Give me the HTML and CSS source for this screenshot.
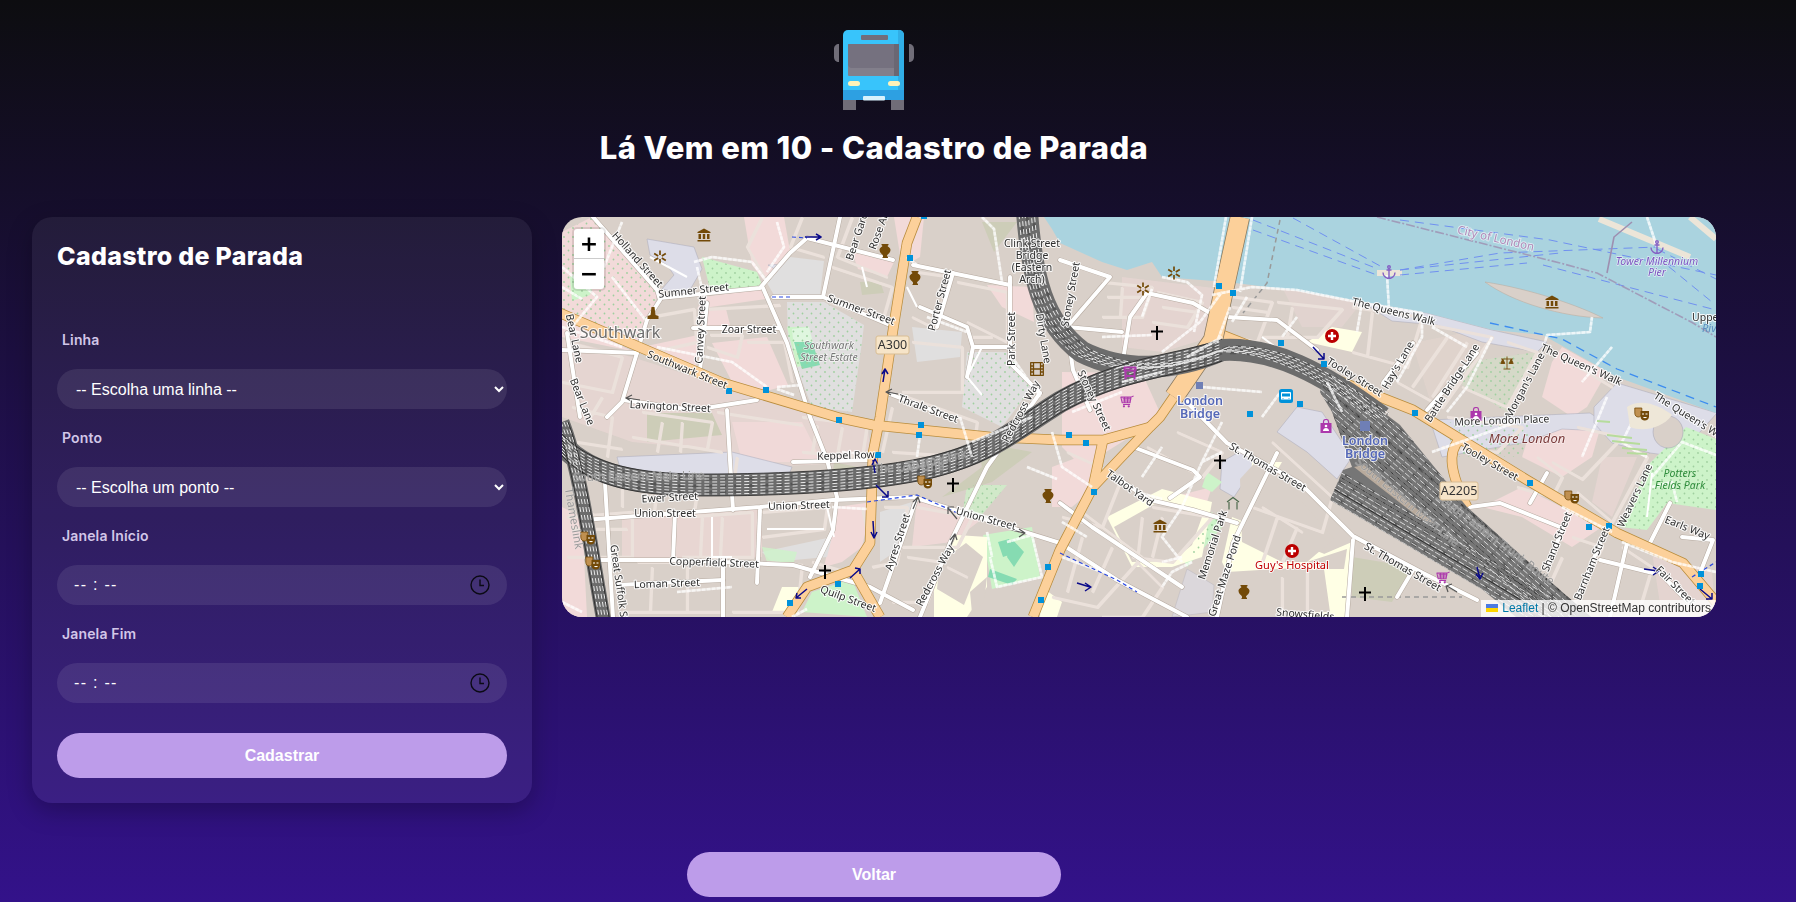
FILE: index.html
```html
<!DOCTYPE html>
<html lang="pt-BR">
<head>
<meta charset="utf-8">
<title>Lá Vem em 10 - Cadastro de Parada</title>
<link rel="stylesheet" href="styles.css">
</head>
<body>
<div class="page">
  <header class="header">
    <svg class="logo" viewBox="0 0 80 80" aria-hidden="true">
      <path class="bus-grey" d="M5 14c-3 0-5 2-5 5v8c0 3 2 5 5 5zM75 14c3 0 5 2 5 5v8c0 3-2 5-5 5z"/>
      <rect class="bus-grey" x="9" y="66" width="13" height="14"/>
      <rect class="bus-grey" x="57" y="66" width="13" height="14"/>
      <path class="bus-body" d="M9 5a5 5 0 0 1 5-5h51a5 5 0 0 1 5 5v65H9z"/>
      <path class="bus-shade" d="M64 0h1a5 5 0 0 1 5 5v65h-6z"/>
      <rect class="bus-bumper" x="9" y="60" width="61" height="10"/>
      <rect class="bus-sign" x="27" y="5" width="27" height="5" rx="1"/>
      <rect class="bus-win" x="14" y="14" width="51" height="32" rx="1"/>
      <path class="bus-win-top" d="M14 15a1 1 0 0 1 1-1h50v20a4 4 0 0 1-4 4H18a4 4 0 0 1-4-4z"/>
      <rect class="bus-win-side" x="60" y="14" width="5" height="32"/>
      <rect class="bus-light" x="14" y="51" width="12" height="5" rx="2.5"/>
      <rect class="bus-light" x="54" y="51" width="12" height="5" rx="2.5"/>
      <rect class="bus-plate" x="29" y="66" width="22" height="4.5" rx="1"/>
    </svg>
    <h1 class="title">Lá Vem em 10 - Cadastro de Parada</h1>
  </header>

  <main class="content">
    <section class="card">
      <h2 class="card-title">Cadastro de Parada</h2>
      <form class="form">
        <label class="label label-first" for="linha">Linha</label>
        <select class="field" id="linha"><option>-- Escolha uma linha --</option></select>
        <label class="label" for="ponto">Ponto</label>
        <select class="field" id="ponto"><option>-- Escolha um ponto --</option></select>
        <label class="label">Janela Início</label>
        <div class="field time"><span class="time-text">-- : --</span>
          <svg class="clock" viewBox="0 0 20 20"><circle cx="10" cy="10" r="9"/><path d="M10 4.5V10.5H14"/></svg></div>
        <label class="label">Janela Fim</label>
        <div class="field time"><span class="time-text">-- : --</span>
          <svg class="clock" viewBox="0 0 20 20"><circle cx="10" cy="10" r="9"/><path d="M10 4.5V10.5H14"/></svg></div>
        <button class="btn btn-submit" type="button">Cadastrar</button>
      </form>
    </section>

    <section class="map">
      <svg class="map-svg" viewBox="0 0 1154 400" aria-label="Mapa">
        <defs>
          <pattern id="dots" width="9" height="9" patternUnits="userSpaceOnUse"><circle class="dot" cx="2" cy="2" r=".9"/><circle class="dot" cx="6.5" cy="6.5" r=".9"/></pattern>
          <clipPath id="fan-clip"><path d="M765 152 838 208 905 290 998 373 1035 405H960L921 373 768 283 781 253 790 250 770 195 758 175z"/></clipPath>
          <path id="fl" d="M740 190 880 310 1000 415"/>
          <path id="fl2" d="M750 272 921 373 985 412"/>
          <path id="ra" d="M0 228C30 260 80 268 140 268 220 268 310 264 370 250 430 235 450 215 498 185 560 150 620 148 660 133"/>
          <path id="rb" d="M465 -5C470 60 480 105 520 135 560 155 610 155 660 133 710 130 760 155 820 200"/>
          <path id="rc" d="M0 205C18 250 30 340 42 405"/>
          <symbol id="i-museum" viewBox="0 0 14 14"><path class="ic-br" d="M.5 4 7 .5 13.500 4V5H.5zM1.500 6h2.500v5H1.500zM5.800 6h2.400v5H5.800zM10 6h2.500v5H10zM.5 12h13v1.500H.5z"/></symbol>
          <symbol id="i-vase" viewBox="0 0 14 14"><path class="ic-br" d="M3.500 0h7v1l-1 1c.5 1 3 1.500 3 4s-2.500 4-3.500 5.500v1h1V14H4v-.5h1v-2C4 10 1.500 8.500 1.500 6S4 3 4.500 2l-1-1z"/></symbol>
          <symbol id="i-star" viewBox="0 0 14 14"><path class="ic-star" d="M7 .5V5M7 9v4.500M1.200 3.500 5.200 6M8.800 8l4 2.500M1.200 10.500 5.200 8M8.800 6l4-2.500"/></symbol>
          <symbol id="i-cross" viewBox="0 0 14 14"><path class="ic-k" d="M6 0h2v4.500h5V6.500H8V14H6V6.500H1V4.500h5z"/></symbol>
          <symbol id="i-hosp" viewBox="0 0 14 14"><circle class="ic-red" cx="7" cy="7" r="7"/><path class="ic-w" d="M5.800 3h2.400v2.800H11v2.400H8.200V11H5.800V8.200H3V5.800h2.800z"/></symbol>
          <symbol id="i-mask" viewBox="0 0 16 14"><path class="ic-br2" d="M.8 1h7v5c0 2.500-1.500 4-3.500 4S.8 8.500.8 6z"/><path class="ic-br" d="M6.500 4h8.500v5.500c0 2.500-2 4-4.250 4S6.500 12 6.500 9.500z"/><path class="ic-w" d="M8 6.500h2v1H8zM11.500 6.500h2v1h-2zM9 10h4c-.5 1.500-3.500 1.500-4 0z"/></symbol>
          <symbol id="i-film" viewBox="0 0 14 14"><path class="ic-film" d="M.7.7h12.600v12.600H.7zM3.500.7v12.600M10.500.7v12.600M.7 4h2.800M.7 7h12.600M.7 10h2.800M10.500 4h2.800M10.500 10h2.800"/></symbol>
          <symbol id="i-anchor" viewBox="0 0 14 14"><path class="ic-anc" d="M7 3v10.500M4.500 5h5M1 7.500c0 3.500 3 6 6 6s6-2.500 6-6"/><circle class="ic-anc" cx="7" cy="2" r="1.300"/></symbol>
          <symbol id="i-scale" viewBox="0 0 14 14"><path class="ic-sc" d="M7 .5V13M3.500 13h7M1 3h12M2.800 3 .8 7.500h4zM11.200 3l-2 4.500h4z"/></symbol>
          <symbol id="i-bag" viewBox="0 0 12 14"><rect class="ic-pu" x=".5" y="4" width="11" height="10"/><path class="ic-pul" d="M3.500 5V2.500a2.500 2 0 0 1 5 0V5"/><circle class="ic-w" cx="6" cy="7" r="1.300"/><path class="ic-w" d="M3 12c0-4 6-4 6 0z"/></symbol>
          <symbol id="i-cart" viewBox="0 0 16 14"><path class="ic-pul" d="M15.500.8 12.500 2H1l1.500 6.500h9l1-6.500M3 4h10M3 6.500h9M5 2l.5 6.500M9 2l-.5 6.500M3.500 10.500h8"/><circle class="ic-pu" cx="4.500" cy="12.500" r="1.300"/><circle class="ic-pu" cx="10" cy="12.500" r="1.300"/></symbol>
          <symbol id="i-market" viewBox="0 0 14 14"><path class="ic-pum" d="M1.500 1.500h11v3h-11zM2.500 4.500v9M11.500 4.500v9M1.500 10h11"/></symbol>
          <symbol id="i-bus" viewBox="0 0 14 14"><rect class="ic-blue" width="14" height="14" rx="2.500"/><path class="ic-w" d="M3 3h8a1 1 0 0 1 1 1v6.500H2V4a1 1 0 0 1 1-1z"/><path class="ic-blue" d="M3 4.500h8v3H3zM3.500 9h1v.8h-1zM9.500 9h1v.8h-1z"/></symbol>
          <symbol id="i-shel" viewBox="0 0 14 14"><path class="ic-shel" d="M1 6 7 1.500 13 6M3 6v7.500M11 6v7.500"/></symbol>
        </defs>

        <rect class="m-build" width="1154" height="400"/>

        <g class="m-pink">
          <path d="M0 15 30 0 98 70 88 100 72 130 0 100z"/>
          <path d="M182 0H222L228 34 203 65 190 48z"/>
          <path d="M142 80 200 72 204 82 135 92z"/>
          <path d="M138 94 164 92 168 108 140 110z"/>
          <path d="M150 126 205 120 226 168 190 178 170 165z"/>
          <path d="M80 130 136 118 134 150 105 146z"/>
          <path d="M0 100 70 134 0 120z"/>
          <path d="M332 0H362L358 40 340 50z"/>
          <path d="M290 35 332 45 325 60 296 52z"/>
          <path d="M425 68 470 70 472 105 440 90z"/>
          <path d="M0 200 70 225 140 232 200 250 310 245 305 205 245 195 170 172 70 140 0 122z" opacity=".5"/>
          <path d="M170 205 240 205 260 245 180 245z" opacity=".8"/>
          <path d="M60 300 200 292 200 340 110 345 60 340z" opacity=".6"/>
          <path d="M275 290 310 285 300 330 280 345 262 350z"/>
          <path d="M0 290 20 300 25 400 0 400z"/>
          <path d="M355 282 420 302 390 325 350 330z" opacity=".8"/>
          <path d="M500 155 580 156 600 200 520 250 500 230z"/>
          <path d="M560 60 660 72 650 120 600 135 560 130z" opacity=".45"/>
          <path d="M850 126 920 112 940 112 870 190z" opacity=".25"/>
          <path d="M970 208 1040 205 1030 240 1000 260 960 240z"/>
          <path d="M1000 130 1045 155 1025 190 1010 200 980 180 990 145z"/>
          <path d="M960 270 1040 310 1010 330 960 300 920 290z"/>
          <path d="M1040 240 1075 240 1050 300 1030 285z" opacity=".5"/>
          <path d="M610 280 650 270 640 300 610 300z"/>
          <path d="M1090 335 1150 355 1154 400 1100 400z" opacity=".45"/>
          <path d="M720 70 800 85 780 110 740 110z" opacity=".35"/>
          <path d="M490 250 530 235 540 265 510 290 490 290z"/>
        </g>

        <g class="m-lilac">
          <path d="M85 22 132 30 140 52 125 78 100 72 112 58 105 48 88 38z"/>
          <path d="M206 48 260 45 256 55 222 58z"/>
          <path d="M868 203 1028 196 1088 236 1040 214 1000 212 965 225 880 240z"/>
          <path d="M1055 166 1155 196 1128 226 1118 240 1088 236 1050 226 1032 206 1032 190z"/>
          <path d="M800 85 865 96 930 113 985 125 975 135 920 125 875 108 830 104z"/>
          <path d="M660 245 682 232 696 244 672 280 658 272z"/>
          <path d="M735 190 760 195 790 240 775 262 745 235 715 215z"/>
          <path d="M55 240 170 235 230 250 225 262 60 258z"/>
          <path d="M610 400 650 395 652 368 625 352z" opacity=".6"/>
        </g>
        <g class="m-grey">
          <path d="M205 66 228 40 262 44 258 78 212 78z"/>
          <path d="M225 85 262 85 302 108 300 125 290 195 250 190 226 128z"/>
          <path d="M200 335 270 320 265 340 210 345z"/>
          <path d="M318 295 350 285 340 330 318 345z"/>
          <path d="M350 110 400 115 398 140 355 145z"/>
          <path d="M405 135 445 135 470 170 440 210 400 190z"/>
        </g>
        <g class="m-green">
          <path d="M140 40 195 55 200 68 170 74 148 72z"/>
          <path d="M8 60 40 40 28 78 10 84z"/>
          <path d="M225 110 245 110 255 145 235 150z"/>
          <path d="M1088 246 1124 210 1154 222V293L1105 286 1085 313 1058 310z"/>
          <path d="M240 395 250 375 290 362 305 400z"/>
          <path d="M421 318 470 310 478 360 430 372z"/>
          <path d="M405 268 445 268 418 300 400 300z" opacity=".7"/>
          <path d="M645 255 660 265 650 275 640 270z"/>
          <path d="M635 310 650 295 660 310 625 350 620 340z"/>
          <path d="M200 330 235 335 232 345 205 345z" opacity=".8"/>
          <path d="M905 145 975 135 945 195 900 168z" opacity=".25"/>
        </g>
        <path class="m-green2" d="M230 112 247 110 252 130 232 132z"/>
        <path class="m-leis" d="M232 125 250 125 258 148 240 152z"/>
        <path class="m-leis" d="M436 325 447 322 453 336 441 340zM450 322 462 335 452 350 445 340zM428 352 455 362 450 368 426 360z"/>
        <g class="m-yellow">
          <path d="M372 355 395 318 425 320 425 370 405 400 372 400z"/>
          <path d="M545 300 600 272 650 285 640 340 610 350 570 350z"/>
          <path d="M690 245 720 245 700 280 688 270z"/>
          <path d="M770 110 800 115 790 135 745 125z"/>
          <path d="M755 340 790 325 785 400 730 400 735 370z"/>
          <path d="M660 345 670 300 770 340 750 350 665 355z"/>
          <path d="M220 370 245 370 230 395 210 395z"/>
          <path d="M480 370 500 385 495 400 478 400z"/>
        </g>
        <g class="m-infill">
          <path d="M378 345 404 326 421 340 402 388 375 372z"/>
          <path d="M408 375 425 360 422 385 410 396z"/>
          <path d="M552 310 598 284 640 300 630 328 610 344 570 345z"/>
          <path d="M678 262 700 238 772 322 745 345 720 345 680 325z"/>
          <path d="M700 355 762 352 768 395 700 395z"/>
          <path d="M745 345 785 332 782 352 755 352z"/>
        </g>
        <path class="m-olive" d="M85 196 150 196 160 218 85 225zM298 65 318 64 322 76 300 78zM272 245 295 250 285 265 270 262zM790 340 850 350 830 385 790 380zM415 225 470 235 430 265 380 280 420 250zM455 5 432 35 420 5z"/>
        <path class="m-dots" d="M1088 246 1124 210 1154 222V293L1105 286 1085 313 1058 310zM225 85 262 85 302 108 300 125 290 195 250 190 226 128zM0 15 30 0 98 70 88 100 72 130 0 100zM140 40 195 55 200 68 170 74 148 72zM880 205 970 205 960 240 895 240zM405 135 445 135 470 170 440 210 400 190zM405 268 445 268 418 300 400 300zM905 145 975 135 945 195 900 168zM640 310 655 295 660 310 625 350z"/>

        <path class="m-water" d="M482 0H1154V196L1055 160 981 118 931 113 865 96 791 83 731 73 665 65 600 60 590 45 565 53 540 45 498 26 490 12z"/>
        <path class="m-isle" d="M923 65C970 72 1020 90 1041 101 1000 100 950 85 923 65z"/>
        <path class="m-pier" d="M1037 2 1128 40M815 56H840M1128 0 1154 22"/>
        <g class="m-ferry">
          <path d="M691 3 811 50M691 13 815 58M731 1 820 50M838 53 931 43 998 36M838 58 965 46"/>
          <path d="M838 53 938 36 1095 30M981 48 1154 93M838 3 988 23 1154 58M1095 32 1154 62M1095 40 1150 85"/>
          <path class="m-ferry2" d="M928 106 1000 122 1055 152 1154 190"/>
        </g>
        <path class="m-bound" d="M815 0 998 46 1035 56 1131 106 1154 120"/>
        <path class="m-bound2" d="M1045 56 1052 20 1070 5"/>
        <path class="m-tunnel" d="M718 3 705 66 681 96M780 380 900 380"/>

        <path id="edges" class="m-gap" d="M5 125 60 140 50 175 0 165M90 135 135 125M88 100 132 92 134 122M145 92 218 88M148 118 180 118 175 140 145 130M185 125 222 125 230 165M10 190 50 200 45 240M80 195 150 205 145 232M155 195 240 208M240 200 305 208 300 240 240 235M175 240 170 275M70 220 160 235M15 225 60 232M200 0 185 30 205 65M240 0 228 30 262 40M290 0 275 40 325 60M270 50 330 70 320 105 268 85M355 55 390 60 370 110 350 100M395 65 445 75 445 125 405 105M405 120 430 120M350 125 400 130 400 175 340 175M345 180 415 205 410 240 330 235M330 190 320 235M5 300 70 295 70 340 5 340M75 345 160 345 160 395 60 395M120 300 190 295 190 340 120 340M200 295 265 290 262 312 200 320M205 345 240 348 235 395 170 395M300 290 308 330 285 355 250 345M322 290 345 290 335 345 310 350M355 290 410 300 395 330 340 330M345 340 380 345 365 385 330 385M505 235 560 260 540 310 500 300M520 295 580 340 535 390 490 380M590 290 650 300 610 345 570 340M575 345 600 370 580 400 540 400M710 225 770 280 760 315 690 290M615 215 660 235 640 260 585 230M540 65 590 70 580 100 540 100M595 75 640 85 625 110 590 105M660 78 710 85 695 125 650 115M715 85 780 92 755 120 700 120M790 90 860 100 845 150 790 135M870 108 930 120 880 190 835 165M945 125 975 135 945 190 900 170M885 200 960 210 935 235 880 230M975 240 1000 260 990 280 955 270M1050 170 1000 140M1015 210 1060 220 1020 262 990 245M1060 225 1085 240 1050 305 1015 275M1010 320 1040 330 1005 400 975 395 1000 340M1060 330 1090 350 1075 400 1050 400M25 205 40 180M100 205 95 235M120 205 118 235M280 210 275 238M255 208 250 235M10 312H65M30 295V340M90 350 88 395M125 350 125 395M140 300 138 340M160 300 158 340M60 270 60 290M95 270 92 295M135 275 132 295M545 80H585M560 70 558 100M600 90 635 95M670 90 705 95M730 90 725 120M810 95 805 140M885 120 850 170M905 125 870 180M600 300 590 340M520 320 505 375M550 330 530 375M700 290 740 315M715 300 700 345M735 310 720 345M720 360V395M745 355V395M385 350 405 360M580 300 575 345"/>
        <use href="#edges" class="m-edge"/>

        <g id="streets">
          <path d="M31 0 95 73 98 83 85 103 78 126 60 185 45 200"/>
          <path d="M98 81 198 71 228 36 245 21 331 43"/>
          <path d="M278 0 261 80"/>
          <path d="M211 80H261L328 108"/>
          <path d="M201 71 225 126 248 200 265 243 275 280 271 313 248 360"/>
          <path d="M131 111H218"/>
          <path d="M145 86 138 153"/>
          <path d="M61 183 131 193 195 183"/>
          <path d="M-2 133 75 136"/>
          <path d="M5 116 18 200"/>
          <path d="M351 48 448 68"/>
          <path d="M391 56 375 110"/>
          <path d="M448 60V146L478 176"/>
          <path d="M411 130H445"/>
          <path d="M358 90 405 110 411 130 405 160"/>
          <path d="M325 176 391 201"/>
          <path d="M478 176 425 250 388 326 358 400"/>
          <path d="M355 280 318 386"/>
          <path d="M231 245 308 243"/>
          <path d="M21 303 198 290 271 283 351 280 498 326 555 363 625 400"/>
          <path d="M25 343 115 343 231 348 308 370 351 393"/>
          <path d="M55 368 161 363"/>
          <path d="M43 266 51 400"/>
          <path d="M198 293 195 366"/>
          <path d="M161 343V400"/>
          <path d="M165 193 171 293"/>
          <path d="M113 296 111 343"/>
          <path d="M585 76 631 86 655 100"/>
          <path d="M585 76 568 100 561 143"/>
          <path d="M498 43 548 60 505 110 511 153 528 193"/>
          <path d="M505 110 560 115"/>
          <path d="M665 100 715 103 755 133"/>
          <path d="M851 126 821 166"/>
          <path d="M915 136 865 193"/>
          <path d="M620 180 665 226 738 266 791 319 861 356 915 383"/>
          <path d="M548 256 588 283 631 293 675 306"/>
          <path d="M571 230 631 253 638 260 608 281"/>
          <path d="M715 236 671 326 655 400"/>
          <path d="M498 286 530 310 620 370"/>
          <path d="M791 323 785 400"/>
          <path d="M851 353 835 380"/>
          <path d="M908 290 938 286 998 310"/>
          <path d="M985 256 968 286"/>
          <path d="M1005 301 985 350"/>
          <path d="M1041 320 1015 380"/>
          <path d="M1065 326 1048 400"/>
          <path d="M1038 343 1091 356"/>
          <path d="M1108 286 1088 326"/>
          <path d="M1098 356 1124 383"/>
          <path d="M1120 320 1151 323 1138 356"/>
        </g>
        <use href="#streets" class="st-case"/>
        <use href="#streets" class="st-fill"/>
        <path class="st-thin" d="M88 40 125 60M700 120 720 135M265 290 272 320M205 312 262 312M150 300 150 340 170 340M300 50 305 70M345 70 355 90M420 130 405 160 420 178M1090 256 1085 300M815 215 830 240"/>

        <g id="trunk">
          <path d="M651 123 598 200 588 210 531 270 498 333 471 400"/>
          <path d="M655 116 851 193 965 263 1055 316 1121 346 1154 385"/>
          <path d="M-2 96 161 166 278 201 311 208 428 220 498 223 541 223 588 210"/>
          <path d="M355 0 345 26 331 113 318 200 311 236 308 326 291 353 245 370 225 400"/>
          <path d="M291 353 318 400"/>
          <path d="M541 223 531 270"/>
          <path d="M898 222C885 235 888 255 905 290"/>
        </g>
        <use href="#trunk" class="tr-case"/>
        <use href="#trunk" class="tr-fill"/>
        <path class="tr-wide-case" d="M678 0 651 123 612 180"/>
        <path class="tr-wide" d="M678 0 651 123 612 180"/>

        <use href="#rc" class="rail-bed rail-bed-n"/>
        <use href="#ra" class="rail-bed"/>
        <use href="#rb" class="rail-bed"/>
        <path class="rail-fan" d="M765 152 838 208 905 290 998 373 1035 405H960L921 373 768 283 781 253 790 250 770 195 758 175z"/>
        <path class="rail-gap" d="M792 250 802 248 872 306 860 303z"/>

        <g class="rail-blk">
          <use href="#ra" y="-6"/><use href="#ra" y="1"/><use href="#ra" y="7"/>
          <use href="#rb" x="-6"/><use href="#rb" y="3"/><use href="#rb" x="6" y="-3"/>
        </g>
        <g class="rail-wh">
          <use href="#ra" y="-9"/><use href="#ra" y="-6"/><use href="#ra" y="-3"/><use href="#ra"/><use href="#ra" y="3"/><use href="#ra" y="6"/><use href="#ra" y="9"/>
          <use href="#rb" x="-8" y="2"/><use href="#rb" x="-5" y="1"/><use href="#rb" x="-2" y="1"/><use href="#rb" x="1"/><use href="#rb" x="4" y="-2"/><use href="#rb" x="7" y="-3"/>
          <use href="#rc" x="-4"/><use href="#rc" x="-1"/><use href="#rc" x="2"/><use href="#rc" x="5"/>
        </g>
        <g clip-path="url(#fan-clip)">
          <g class="rail-blk">
            <use href="#fl" x="3" y="-3"/><use href="#fl" x="9" y="-9"/><use href="#fl" x="15" y="-15"/><use href="#fl" x="21" y="-21"/><use href="#fl" x="27" y="-27"/><use href="#fl" x="33" y="-33"/><use href="#fl" x="39" y="-39"/><use href="#fl" x="45" y="-45"/><use href="#fl" x="51" y="-51"/><use href="#fl" x="57" y="-57"/>
            <use href="#fl2" x="3" y="-3"/><use href="#fl2" x="9" y="-9"/><use href="#fl2" x="15" y="-15"/><use href="#fl2" x="21" y="-21"/>
          </g>
          <g class="rail-wh rail-wh-f">
            <use href="#fl"/><use href="#fl" x="3" y="-3"/><use href="#fl" x="6" y="-6"/><use href="#fl" x="9" y="-9"/><use href="#fl" x="12" y="-12"/><use href="#fl" x="15" y="-15"/><use href="#fl" x="18" y="-18"/><use href="#fl" x="21" y="-21"/><use href="#fl" x="24" y="-24"/><use href="#fl" x="27" y="-27"/><use href="#fl" x="30" y="-30"/><use href="#fl" x="33" y="-33"/><use href="#fl" x="36" y="-36"/><use href="#fl" x="39" y="-39"/><use href="#fl" x="42" y="-42"/><use href="#fl" x="45" y="-45"/><use href="#fl" x="48" y="-48"/><use href="#fl" x="51" y="-51"/><use href="#fl" x="54" y="-54"/><use href="#fl" x="57" y="-57"/><use href="#fl" x="60" y="-60"/>
            <use href="#fl2"/><use href="#fl2" x="3" y="-3"/><use href="#fl2" x="6" y="-6"/><use href="#fl2" x="9" y="-9"/><use href="#fl2" x="12" y="-12"/><use href="#fl2" x="15" y="-15"/><use href="#fl2" x="18" y="-18"/><use href="#fl2" x="21" y="-21"/>
          </g>
          <g class="rail-k">
            <use href="#fl" x="6" y="-6"/><use href="#fl" x="21" y="-21"/><use href="#fl" x="36" y="-36"/><use href="#fl" x="51" y="-51"/><use href="#fl2" x="8" y="-8"/><use href="#fl2" x="18" y="-18"/>
          </g>
        </g>
        <g class="rail-k"><use href="#rc" x="-6"/><use href="#rc" x="6"/><use href="#ra" y="-11"/><use href="#ra" y="11"/></g>

        <path id="foots" class="foot-under" d="M60 5 38 60M0 50 35 80 10 110M50 60 85 105M132 45 150 40 190 45 205 65M215 5 222 30 205 55M135 50 142 80M95 130 170 145 205 170M215 170 240 168M232 178 215 172M0 110 60 130M20 82 0 70M345 40 355 48M420 0 432 12 440 65M365 100 405 115M398 200 410 240M450 140 478 180M280 235 312 238M358 218 355 240M410 225 470 200M270 290 305 292M395 290 440 305M425 315 430 340M600 135 638 105 660 75M600 60 625 65 640 78 632 115M590 72 580 100M650 78 690 70 735 73 790 84 860 96 860 120 835 165M735 100 720 120M800 85 795 115M930 120 905 170 885 195M870 110 905 130M1050 130 1020 165M560 175 510 195M490 215 500 250 530 270M600 155 560 165M640 170 700 175M720 173 700 200M660 205 640 245 620 290 600 320 620 345M640 245 660 235M580 260 600 230M500 305 525 320M620 340 600 345M630 345 610 355 600 370M765 165 780 195M1045 180 1020 240M1070 205 1060 225 1075 235 1085 240M1090 260 1120 225 1154 238M1090 270 1110 265 1115 285M1060 325 1110 345 1154 355M1000 290 1050 315M870 235 955 205M465 250 495 262M500 340 540 355M575 275 600 282M0 385 20 395M115 375 170 370M230 400 245 392M1030 100 1028 115 985 118 983 125M825 58 827 92M1085 0 1095 30M664 0 652 70M690 0 678 75M668 90 655 125M685 80 670 105M540 120 590 118M445 325 470 318 480 360 435 370 428 340M625 140 660 120"/>
        <use href="#foots" class="m-foot"/>
        <path class="m-dash-blue" d="M210 80H228M305 285 355 278 400 298M498 336 555 363 575 375M0 395 10 400M230 20 245 21M1130 360 1154 345"/>
        <path class="m-round" d="M1106 199a15 16 0 1 0 .1 0z"/>
        <path class="m-island" d="M1065 190C1080 180 1100 190 1110 198 1100 212 1080 215 1068 210z"/>
        <path class="m-strip" d="M1035 204 1048 205M1045 218 1070 221M1050 224 1078 227M1060 231 1085 233M1065 236 1085 237"/>

        <g class="m-arrow">
          <path d="M243 20H258M254 17 259 20 254 23"/>
          <path d="M321 165 323 152M320 157 323 152 326 157"/>
          <path d="M313 256 311 243M310 248 313 242 316 248"/>
          <path d="M314 268 326 280M320 280 326 280 326 274"/>
          <path d="M311 304 312 320M309 315 312 321 315 315"/>
          <path d="M288 361 298 352M293 351 298 352 298 357"/>
          <path d="M245 372 234 381M239 381 234 381 235 376"/>
          <path d="M751 130 762 142M756 142 762 142 762 136"/>
          <path d="M1082 352 1096 354M1091 350 1097 354 1091 358"/>
          <path d="M1138 372 1150 382M1144 382 1150 382 1150 376"/>
          <path d="M915 350 918 362M914 357 918 362 921 356"/>
          <path d="M515 366 528 370M523 366 529 370 523 374"/>
        </g>
        <path class="m-arrow-g" d="M78 183 65 181M70 178 64 181 69 184M336 177 325 175M330 172 324 175 329 178M351 292 356 280M351 285 356 280 358 286M388 330 393 318M388 323 393 317 395 323M395 302 386 291M392 290 386 290 386 297M450 313 462 316M457 312 463 316 457 320M895 375 885 369M890 367 884 369 886 375"/>

        <g class="m-stop">
          <rect x="164" y="171" width="6" height="6"/><rect x="201" y="170" width="6" height="6"/><rect x="274" y="200" width="6" height="6"/>
          <rect x="345" y="38" width="6" height="6"/><rect x="359" y="-4" width="6" height="6"/><rect x="356" y="205" width="6" height="6"/>
          <rect x="354" y="215" width="6" height="6"/><rect x="313" y="235" width="6" height="6"/><rect x="273" y="364" width="6" height="6"/>
          <rect x="225" y="383" width="6" height="6"/><rect x="483" y="347" width="6" height="6"/><rect x="476" y="380" width="6" height="6"/>
          <rect x="654" y="66" width="6" height="6"/><rect x="668" y="73" width="6" height="6"/><rect x="716" y="123" width="6" height="6"/>
          <rect x="759" y="144" width="6" height="6"/><rect x="735" y="184" width="6" height="6"/><rect x="685" y="194" width="6" height="6"/>
          <rect x="850" y="193" width="6" height="6"/><rect x="504" y="215" width="6" height="6"/><rect x="521" y="223" width="6" height="6"/>
          <rect x="529" y="272" width="6" height="6"/><rect x="965" y="263" width="6" height="6"/><rect x="1024" y="307" width="6" height="6"/>
          <rect x="1044" y="306" width="6" height="6"/><rect x="1136" y="354" width="6" height="6"/><rect x="1135" y="366" width="6" height="6"/>
        </g>
        <path class="m-station" d="M634 165h7v7h-7zM798 204h10v10h-10z"/>

        <use href="#i-museum" x="135" y="11" width="14" height="14"/>
        <use href="#i-museum" x="983" y="78" width="14" height="14"/>
        <use href="#i-museum" x="591" y="302" width="14" height="14"/>
        <use href="#i-star" x="91" y="33" width="14" height="14"/>
        <use href="#i-star" x="605" y="49" width="14" height="14"/>
        <use href="#i-star" x="574" y="65" width="14" height="14"/>
        <use href="#i-vase" x="316" y="27" width="14" height="14"/>
        <use href="#i-vase" x="346" y="54" width="14" height="14"/>
        <use href="#i-vase" x="479" y="272" width="14" height="14"/>
        <use href="#i-vase" x="675" y="368" width="14" height="14"/>
        <use href="#i-film" x="468" y="145" width="14" height="14"/>
        <use href="#i-mask" x="18" y="314" width="16" height="14"/>
        <use href="#i-mask" x="23" y="339" width="16" height="14"/>
        <use href="#i-mask" x="355" y="258" width="16" height="14"/>
        <use href="#i-mask" x="1072" y="190" width="16" height="14"/>
        <use href="#i-mask" x="1002" y="273" width="16" height="14"/>
        <use href="#i-cross" x="384" y="261" width="14" height="14"/>
        <use href="#i-cross" x="256" y="348" width="14" height="14"/>
        <use href="#i-cross" x="588" y="109" width="14" height="14"/>
        <use href="#i-cross" x="651" y="238" width="14" height="14"/>
        <use href="#i-cross" x="796" y="370" width="14" height="14"/>
        <use href="#i-hosp" x="763" y="112" width="14" height="14"/>
        <use href="#i-hosp" x="723" y="327" width="14" height="14"/>
        <use href="#i-bus" x="717" y="172" width="14" height="14"/>
        <use href="#i-anchor" x="820" y="48" width="14" height="14"/>
        <use href="#i-anchor" x="1088" y="23" width="14" height="14"/>
        <use href="#i-scale" x="938" y="139" width="14" height="14"/>
        <use href="#i-bag" x="908" y="190" width="12" height="14"/>
        <use href="#i-bag" x="758" y="202" width="12" height="14"/>
        <use href="#i-cart" x="558" y="178" width="14" height="13"/>
        <use href="#i-cart" x="874" y="354" width="14" height="13"/>
        <use href="#i-market" x="561" y="149" width="14" height="14"/>
        <use href="#i-shel" x="664" y="279" width="14" height="14"/>
        <path class="ic-monu" d="M89.500 90h3l1 8 3 1v3h-11v-3l3-1z"/>

        <g class="lb">
          <text transform="translate(73 45) rotate(48)">Holland Street</text>
          <text transform="translate(132 77) rotate(-6)">Sumner Street</text>
          <text transform="translate(298 96) rotate(20)">Sumner Street</text>
          <text transform="translate(142 113) rotate(-87)">Canvey Street</text>
          <text transform="translate(187 116)">Zoar Street</text>
          <text transform="translate(124 156) rotate(22)">Southwark Street</text>
          <text transform="translate(9 122) rotate(78)">Bear Lane</text>
          <text transform="translate(17 186) rotate(68)">Bear Lane</text>
          <text transform="translate(301 12) rotate(-72)">Bear Gardens</text>
          <text transform="translate(322 10) rotate(-70)">Rose Alley</text>
          <text transform="translate(381 84) rotate(-75)">Porter Street</text>
          <text transform="translate(453 122) rotate(-90)">Park Street</text>
          <text transform="translate(478 122) rotate(80)">Dirty Lane</text>
          <text transform="translate(462 196) rotate(-62)">Redcross Way</text>
          <text transform="translate(108 193) rotate(3)">Lavington Street</text>
          <text transform="translate(365 195) rotate(20)">Thrale Street</text>
          <text transform="translate(284 242) rotate(-2)">Keppel Row</text>
          <text transform="translate(108 284) rotate(-3)">Ewer Street</text>
          <text transform="translate(237 292) rotate(-2)">Union Street</text>
          <text transform="translate(103 300)">Union Street</text>
          <text transform="translate(423 305) rotate(15)">Union Street</text>
          <text transform="translate(339 326) rotate(-72)">Ayres Street</text>
          <text transform="translate(376 360) rotate(-62)">Redcross Way</text>
          <text transform="translate(55 376) rotate(82)">Great Suffolk Street</text>
          <text transform="translate(152 349) rotate(2)">Copperfield Street</text>
          <text transform="translate(105 370) rotate(-2)">Loman Street</text>
          <text transform="translate(285 385) rotate(20)">Quilp Street</text>
          <text transform="translate(512 78) rotate(-80)">Stoney Street</text>
          <text transform="translate(529 185) rotate(65)">Stoney Street</text>
          <text transform="translate(831 98) rotate(14)">The Queens Walk</text>
          <text transform="translate(791 163) rotate(32)">Tooley Street</text>
          <text transform="translate(926 248) rotate(30)">Tooley Street</text>
          <text transform="translate(839 150) rotate(-60)">Hay's Lane</text>
          <text transform="translate(893 168) rotate(-57)">Battle Bridge Lane</text>
          <text transform="translate(966 170) rotate(-62)">Morgan's Lane</text>
          <text transform="translate(940 207) rotate(-2)">More London Place</text>
          <text transform="translate(704 253) rotate(30)">St. Thomas Street</text>
          <text transform="translate(839 353) rotate(30)">St. Thomas Street</text>
          <text transform="translate(566 274) rotate(35)">Talbot Yard</text>
          <text transform="translate(654 329) rotate(-72)">Memorial Park</text>
          <text transform="translate(666 360) rotate(-72)">Great Maze Pond</text>
          <text transform="translate(743 401) rotate(5)">Snowsfields</text>
          <text transform="translate(1018 151) rotate(24)">The Queen's Walk</text>
          <text transform="translate(1128 204) rotate(32)">The Queen's Walk</text>
          <text transform="translate(1076 280) rotate(-65)">Weavers Lane</text>
          <text transform="translate(1124 314) rotate(22)">Earls Way</text>
          <text transform="translate(998 326) rotate(-68)">Shand Street</text>
          <text transform="translate(1033 348) rotate(-68)">Barnham Street</text>
          <text transform="translate(1111 371) rotate(45)">Fair Street</text>
          <text x="470" y="30">Clink Street</text>
          <text x="470" y="42">Bridge</text>
          <text x="470" y="54">(Eastern</text>
          <text x="470" y="66">Arch)</text>
          <text class="lb-start" x="1130" y="104">Upper Thames</text>
        </g>
        <g class="lb lb-grey">
          <text transform="translate(375 247) rotate(-12)">Thameslink</text>
          <text transform="translate(347 254) rotate(-2)">The Low Line</text>
          <text transform="translate(77 263) rotate(-1)">South Eastern Main Line</text>
          <text transform="translate(8 302) rotate(80)">Thameslink</text>
          <text transform="translate(843 288) rotate(40)">South Eastern Main Line</text>
          <text transform="translate(931 325) rotate(37)">South Eastern Trunk Route</text>
        </g>
        <text class="lb-area" x="58" y="121">Southwark</text>
        <g class="lb-it"><text x="267" y="132">Southwark</text><text x="267" y="144">Street Estate</text></g>
        <g class="lb-st"><text x="638" y="188">London</text><text x="638" y="201">Bridge</text><text x="803" y="228">London</text><text x="803" y="241">Bridge</text></g>
        <text class="lb-bound" transform="translate(933 25) rotate(13)">City of London</text>
        <text class="lb-dist" x="965" y="226">More London</text>
        <text class="lb-hosp" x="730" y="352">Guy's Hospital</text>
        <g class="lb-pier"><text x="1095" y="48">Tower Millennium</text><text x="1095" y="59">Pier</text></g>
        <text class="lb-riv" x="1140" y="115">River Thames</text>
        <g class="lb-park"><text x="1118" y="260">Potters</text><text x="1118" y="272">Fields Park</text></g>

        <g class="shield">
          <rect x="314" y="119" width="33" height="18" rx="2"/><text x="330.500" y="132">A300</text>
          <rect x="878" y="265" width="38" height="18" rx="2"/><text x="897" y="278">A2205</text>
        </g>
      </svg>

      <div class="zoom">
        <a class="zoom-btn zoom-in">+</a>
        <a class="zoom-btn">−</a>
      </div>
      <div class="attrib"><svg class="flag" viewBox="0 0 12 8"><rect width="12" height="4" class="flag-b"/><rect y="4" width="12" height="4" class="flag-y"/></svg><a class="attrib-link">Leaflet</a> | © OpenStreetMap contributors</div>
    </section>
  </main>

  <footer class="footer">
    <button class="btn btn-back" type="button">Voltar</button>
  </footer>
</div>
</body>
</html>
```
FILE: styles.css
```css
* { box-sizing: border-box; }
html, body { margin: 0; height: 902px; overflow: hidden; }
body { background: linear-gradient(180deg, #0d0d10 0%, #33128a 100%); color: #fff; }
.page { width: 1748px; height: 902px; padding: 30px 32px 5px; display: flex; flex-direction: column; }
.header { display: flex; flex-direction: column; align-items: center; }
.logo { width: 80px; height: 80px; display: block; }
.bus-grey { fill: #706d78; }
.bus-body { fill: #38c4fb; }
.bus-shade { fill: #31aee6; }
.bus-bumper { fill: #2da0e2; }
.bus-sign { fill: #716e7c; }
.bus-win { fill: #827f8b; }
.bus-win-top { fill: #75717f; }
.bus-win-side { fill: #6a6773; }
.bus-light { fill: #fff3b8; }
.bus-plate { fill: #d8f2fd; }
.title { margin: 19px 0 0; font: 800 31px/38px Inter, sans-serif; color: #fff; letter-spacing: .42px; white-space: nowrap; }
.content { display: flex; gap: 30px; align-items: flex-start; margin-top: 50px; }
.card { width: 500px; flex: none; height: 586px; padding: 24px 25px 25px; border-radius: 20px; background: rgba(255, 255, 255, .06); box-shadow: 0 8px 24px rgba(0, 0, 0, .25); }
.card-title { margin: 0; font: 800 25px/30px Inter, sans-serif; color: #fff; letter-spacing: .3px; }
.form { display: flex; flex-direction: column; }
.label { display: block; height: 18px; margin: 0 0 20px 5px; font: 600 14px/18px Inter, sans-serif; letter-spacing: .15px; color: #d2c6e8; }
.label-first { margin-top: 60px; }
.field { display: block; width: 450px; height: 40px; flex: none; border: 0; border-radius: 20px; background-color: rgba(255, 255, 255, .085); color: #fff; font: 16px "Liberation Sans", sans-serif; padding: 0 5px 0 15px; margin-bottom: 20px; outline: 0; }
.field option { color: #000; }
.time { display: flex; align-items: center; justify-content: space-between; padding: 0 17px; }
.time-text { font: 16px "Liberation Sans", sans-serif; letter-spacing: 1.3px; }
.clock { width: 20px; height: 20px; fill: none; stroke: #0b0a14; stroke-width: 1.4; }
.btn { display: block; border: 0; height: 45px; border-radius: 25px; background: #bd9cea; color: #fff; font: 700 16px "Liberation Sans", sans-serif; }
.btn-submit { width: 450px; margin-top: 10px; }
.footer { display: flex; justify-content: center; margin-top: 49px; }
.btn-back { width: 374px; }

.map { position: relative; width: 1154px; height: 400px; flex: none; border-radius: 20px; overflow: hidden; }
.map-svg { display: block; width: 1154px; height: 400px; }
.map-svg text { font-family: "Noto Sans", sans-serif; }
.map-svg path, .map-svg g { stroke-linejoin: round; }
.m-build { fill: #d9d0c9; }
.m-infill { fill: #d9d0c9; }
.m-pink path { fill: #f2dad9; }
.m-lilac path { fill: #dddde8; stroke: #a9a9b8; stroke-width: .5; }
.m-grey path { fill: #e0dfdf; }
.m-green path { fill: #cdf3c9; }
.m-green2 { fill: #dff6df; }
.m-leis { fill: #86dbb2; }
.m-yellow path { fill: #ffffe5; }
.m-olive { fill: #cdcdb8; }
.m-dots { fill: url(#dots); }
.dot { fill: #9fcf9f; }
.m-water { fill: #aad3df; }
.m-isle { fill: #d9d0c9; stroke: #b8a99b; stroke-width: .5; }
.m-pier { fill: none; stroke: #ece5d8; stroke-width: 6; }
.foot-under { fill: none; stroke: #fff; stroke-opacity: .55; stroke-width: 2.6; }
.m-foot { fill: none; stroke: #fa8072; stroke-width: 1.5; stroke-dasharray: 3.5 1.5; stroke-opacity: 1; }
.m-ferry { fill: none; stroke: #7090f0; stroke-width: 1; stroke-dasharray: 9 6; }
.m-ferry2 { stroke: #3c8cf0; stroke-width: 1.3; }
.m-bound { fill: none; stroke: #9e8fb0; stroke-width: 1.6; stroke-dasharray: 9 2 2 2; opacity: .8; }
.m-bound2 { fill: none; stroke: #9e8fb0; stroke-width: 1.6; }
.m-tunnel { fill: none; stroke: #999; stroke-width: 1.5; stroke-dasharray: 5 4; }
.m-gap { fill: none; stroke: #ebe1db; stroke-width: 2.4; }
.m-edge { stroke: #b9ab9f; stroke-width: .7; transform: translate(.9px, .9px); }
#streets path { fill: none; }
.st-case { stroke: #b5a99f; stroke-width: 5; stroke-linecap: round; }
.st-fill { stroke: #fff; stroke-width: 4; stroke-linecap: round; }
.st-thin { fill: none; stroke: #fff; stroke-width: 2; }
#trunk path { fill: none; }
.tr-case { stroke: #b98c3c; stroke-width: 10.5; }
.tr-fill { stroke: #fcd09a; stroke-width: 9; }
.tr-wide-case { fill: none; stroke: #8a7a60; stroke-width: 20; }
.tr-wide { fill: none; stroke: #fcd09a; stroke-width: 18.5; }
.rail-bed { fill: none; stroke: #6c6c6c; stroke-width: 22; }
.rail-bed-n { stroke-width: 15; }
.rail-fan { fill: #767676; }
.rail-gap { fill: #b8aa9c; }
.rail-blk { fill: none; stroke: #4e4e4e; stroke-width: 2.8; stroke-dasharray: 6 8; opacity: .75; }
.rail-wh { fill: none; stroke: #fff; stroke-width: 1; stroke-dasharray: 5 3; opacity: .85; }
.rail-wh-f { stroke-width: .9; stroke-dasharray: 6 2; opacity: .8; }
.rail-k { fill: none; stroke: #161616; stroke-width: .7; }
.m-dash-blue { fill: none; stroke: #2a48e0; stroke-width: 1.2; stroke-dasharray: 4 3; }
.m-round { fill: #d9d0c9; stroke: #a9a9b8; stroke-width: .6; }
.m-island { fill: #eee7d8; }
.m-strip { fill: none; stroke: #b6dc9c; stroke-width: 2; }
.m-arrow { fill: none; stroke: #0a0a8a; stroke-width: 1.5; }
.m-arrow-g { fill: none; stroke: #555; stroke-width: 1.2; }
.m-stop rect { fill: #0092da; }
.m-station { fill: #6f7fb5; }
.ic-br { fill: #734a08; }
.ic-br2 { fill: #c09050; stroke: #734a08; stroke-width: .8; }
.ic-star { fill: none; stroke: #734a08; stroke-width: 1.7; }
.ic-k { fill: #000; }
.ic-red { fill: #bb0000; }
.ic-w { fill: #fff; }
.ic-film { fill: none; stroke: #734a08; stroke-width: 1.3; }
.ic-anc { fill: none; stroke: #8461c4; stroke-width: 1.4; }
.ic-sc { fill: #734a08; stroke: #734a08; stroke-width: .9; }
.ic-pu { fill: #ac39ac; }
.ic-pul { fill: none; stroke: #ac39ac; stroke-width: 1.2; }
.ic-pum { fill: none; stroke: #ac39ac; stroke-width: 2; }
.ic-blue { fill: #0092da; }
.ic-shel { fill: none; stroke: #4c6a4c; stroke-width: 1.2; }
.ic-monu { fill: #734a08; }

.lb text { font-size: 10.5px; fill: #2e2e2e; text-anchor: middle; paint-order: stroke; stroke: #fff; stroke-opacity: .85; stroke-width: 2.2px; }
.lb .lb-start { text-anchor: start; }
.lb-grey text { fill: #9a9a9a; font-size: 11.5px; stroke: #eee; stroke-opacity: .3; stroke-width: 1.2px; }
.lb-area { font-size: 16px; fill: #6c6c6c; text-anchor: middle; paint-order: stroke; stroke: #fff; stroke-width: 2px; stroke-opacity: .8; }
.lb-it text { font-size: 10.5px; font-style: italic; fill: #777; text-anchor: middle; paint-order: stroke; stroke: #fff; stroke-width: 1.5px; stroke-opacity: .7; }
.lb-st text { font-size: 12.5px; font-weight: 600; fill: #5568b8; text-anchor: middle; paint-order: stroke; stroke: #fff; stroke-width: 2px; stroke-opacity: .8; }
.lb-bound { font-size: 11.5px; fill: #b089b8; text-anchor: middle; paint-order: stroke; stroke: #fff; stroke-width: 1.8px; stroke-opacity: .6; }
.lb-dist { font-size: 13px; font-style: italic; fill: #7a3a3a; text-anchor: middle; paint-order: stroke; stroke: #fff; stroke-width: 1.5px; stroke-opacity: .5; }
.lb-hosp { font-size: 11px; fill: #c00000; text-anchor: middle; paint-order: stroke; stroke: #fff; stroke-width: 2px; stroke-opacity: .8; }
.lb-pier text { font-size: 10.5px; font-style: italic; fill: #7d55c0; text-anchor: middle; paint-order: stroke; stroke: #fff; stroke-width: 1.5px; stroke-opacity: .6; }
.lb-riv { font-size: 11px; font-style: italic; fill: #5c8fc0; }
.lb-park text { font-size: 10.5px; font-style: italic; fill: #2f8c3c; text-anchor: middle; }
.shield rect { fill: #f6e4c8; stroke: #d8bd94; stroke-width: 1; }
.shield text { font-size: 12.5px; fill: #333; text-anchor: middle; }

.zoom { position: absolute; top: 12px; left: 12px; width: 30px; background: #fff; border-radius: 3px; box-shadow: 0 0 0 2px rgba(0, 0, 0, .1); overflow: hidden; }
.zoom-btn { display: block; height: 30px; text-align: center; color: #000; font: 700 22px/30px "DejaVu Sans", sans-serif; }
.zoom-in { border-bottom: 1px solid #ccc; }
.attrib { position: absolute; right: 0; bottom: 0; height: 17px; padding: 0 5px; white-space: nowrap; font: 12px/17px "Liberation Sans", sans-serif; color: #333; background: rgba(255, 255, 255, .8); }
.flag { width: 12px; height: 8px; margin-right: 4px; }
.flag-b { fill: #4c7be1; }
.flag-y { fill: #ffd500; }
.attrib-link { color: #0078a8; }
```
